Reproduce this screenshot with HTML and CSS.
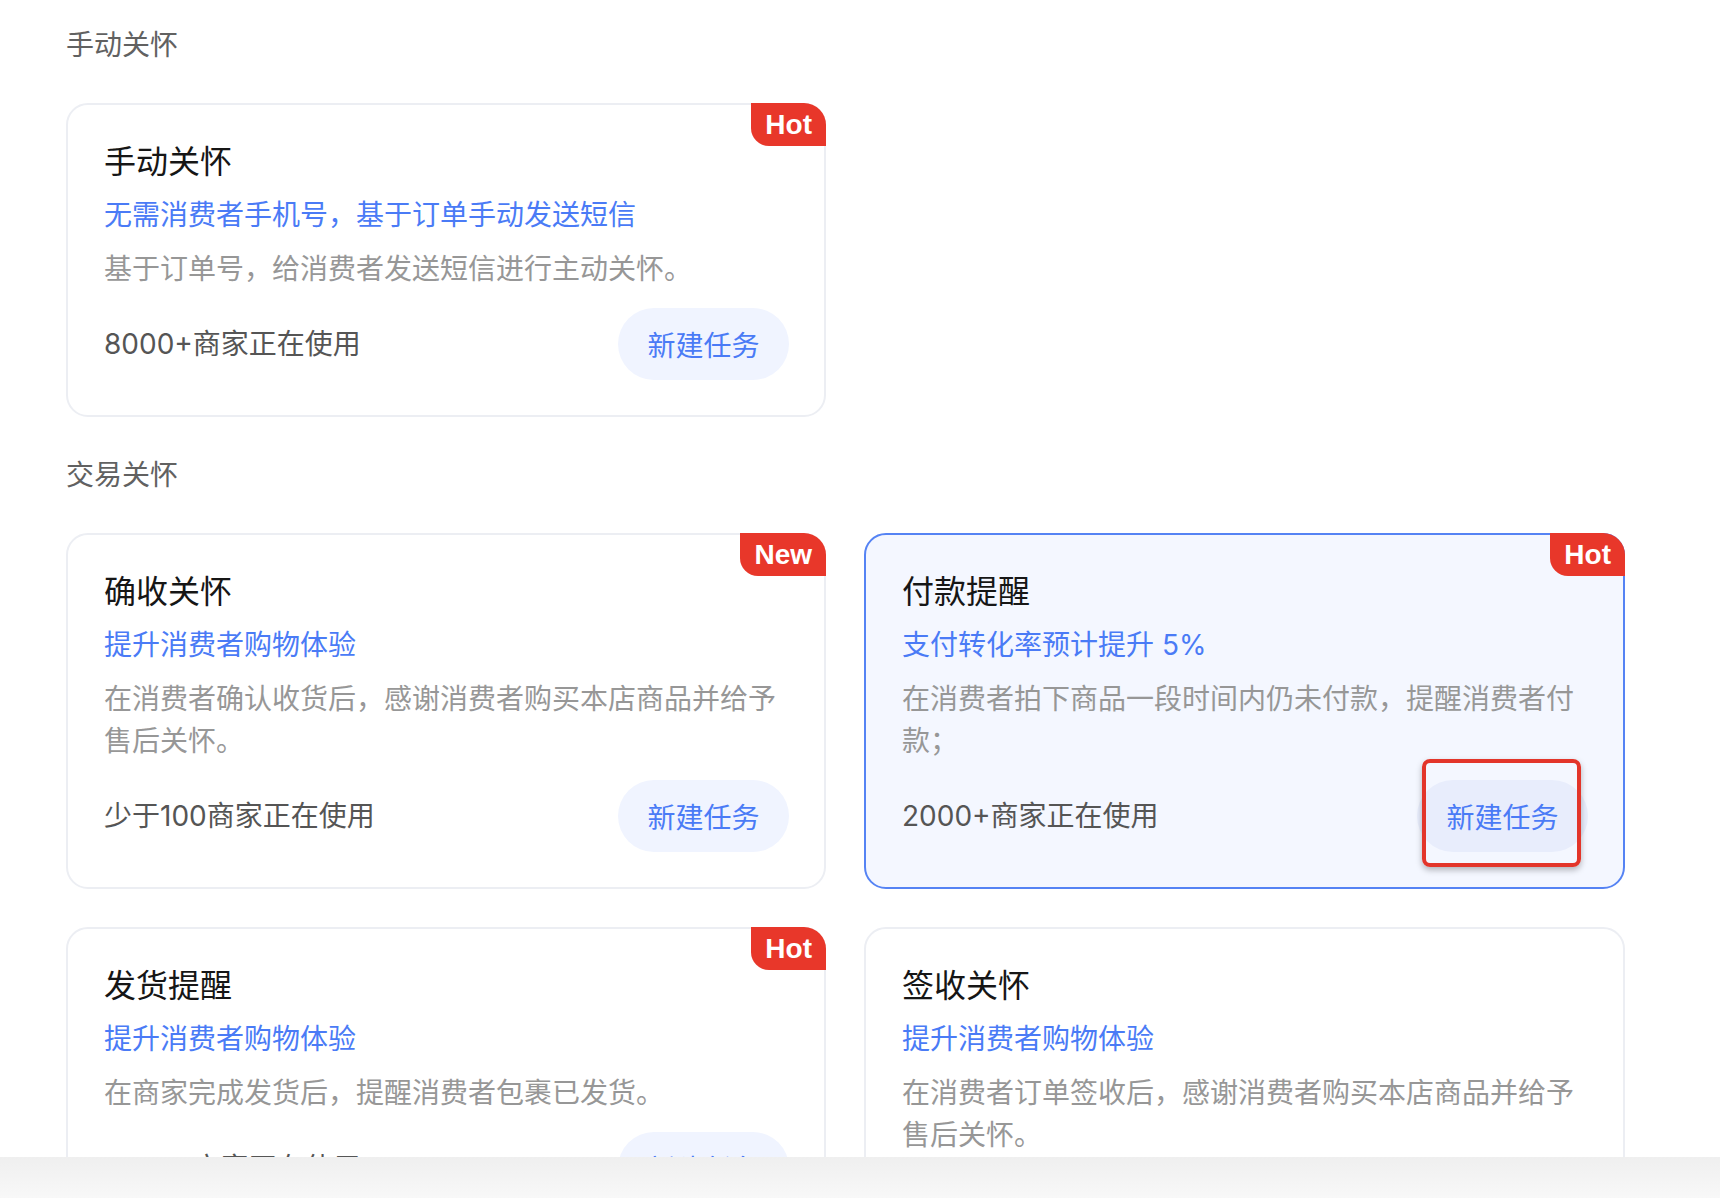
FILE: index.html
```html
<!DOCTYPE html>
<html lang="zh-CN">
<head>
<meta charset="utf-8">
<title>关怀任务</title>
<link rel="stylesheet" href="styles.css">
</head>
<body>
<main class="page">
  <section class="section">
    <h2 class="section-title">手动关怀</h2>
    <div class="grid">
      <div class="card">
        <span class="badge">Hot</span>
        <div class="card-title">手动关怀</div>
        <div class="card-sub">无需消费者手机号，基于订单手动发送短信</div>
        <div class="card-desc">基于订单号，给消费者发送短信进行主动关怀。</div>
        <div class="card-foot">
          <span class="usage">8000+商家正在使用</span>
          <button class="btn">新建任务</button>
        </div>
      </div>
    </div>
  </section>

  <section class="section">
    <h2 class="section-title">交易关怀</h2>
    <div class="grid">
      <div class="card">
        <span class="badge">New</span>
        <div class="card-title">确收关怀</div>
        <div class="card-sub">提升消费者购物体验</div>
        <div class="card-desc">在消费者确认收货后，感谢消费者购买本店商品并给予售后关怀。</div>
        <div class="card-foot">
          <span class="usage">少于100商家正在使用</span>
          <button class="btn">新建任务</button>
        </div>
      </div>
      <div class="card card-active">
        <span class="badge">Hot</span>
        <div class="card-title">付款提醒</div>
        <div class="card-sub">支付转化率预计提升 5%</div>
        <div class="card-desc">在消费者拍下商品一段时间内仍未付款，提醒消费者付款；</div>
        <div class="card-foot">
          <span class="usage">2000+商家正在使用</span>
          <button class="btn btn-marked">新建任务<span class="mark"></span></button>
        </div>
      </div>
      <div class="card">
        <span class="badge">Hot</span>
        <div class="card-title">发货提醒</div>
        <div class="card-sub">提升消费者购物体验</div>
        <div class="card-desc">在商家完成发货后，提醒消费者包裹已发货。</div>
        <div class="card-foot">
          <span class="usage">3000+商家正在使用</span>
          <button class="btn">新建任务</button>
        </div>
      </div>
      <div class="card">
        <div class="card-title">签收关怀</div>
        <div class="card-sub">提升消费者购物体验</div>
        <div class="card-desc">在消费者订单签收后，感谢消费者购买本店商品并给予售后关怀。</div>
        <div class="card-foot">
          <span class="usage">1000+商家正在使用</span>
          <button class="btn">新建任务</button>
        </div>
      </div>
    </div>
  </section>
</main>
<div class="bottom-bar"></div>
</body>
</html>
```

FILE: styles.css
```css
html, body {
  margin: 0;
  padding: 0;
  background: #ffffff;
  overflow: hidden;
  height: 100%;
}

body {
  font-family: "Inter", "Noto Sans CJK SC", sans-serif;
  color: #1a1a1a;
}

.page {
  padding: 25px 0 0 66px;
  display: flex;
  flex-direction: column;
  gap: 38px;
}

.section {
  display: flex;
  flex-direction: column;
  gap: 38px;
}

.section-title {
  margin: 0;
  font-size: 28px;
  line-height: 40px;
  font-weight: 400;
  color: #616161;
}

.grid {
  display: grid;
  grid-template-columns: 760px 761px;
  gap: 38px;
  align-items: start;
}

.card {
  position: relative;
  box-sizing: border-box;
  border: 2px solid #eceef3;
  border-radius: 22px;
  background: #ffffff;
  padding: 33px 35px 35px 36px;
  display: flex;
  flex-direction: column;
}

.card-active {
  border-color: #5583f4;
  background: #f4f7ff;
}

.badge {
  position: absolute;
  top: -2px;
  right: -2px;
  height: 43px;
  padding: 0 14px;
  box-sizing: border-box;
  display: flex;
  align-items: center;
  background: #e8372a;
  color: #ffffff;
  font-family: "Liberation Sans", Arial, sans-serif;
  font-weight: 700;
  font-size: 28px;
  border-radius: 0 22px 0 18px;
}

.card-title {
  font-size: 32px;
  line-height: 48px;
  color: #161616;
}

.card-sub {
  margin-top: 8px;
  font-size: 28px;
  line-height: 42px;
  color: #4a7bf6;
}

.card-desc {
  margin-top: 12px;
  font-size: 28px;
  line-height: 42px;
  color: #979797;
}

.card-foot {
  margin-top: 18px;
  display: flex;
  align-items: center;
  justify-content: space-between;
}

.usage {
  font-size: 28px;
  line-height: 42px;
  color: #555555;
}

.btn {
  position: relative;
  width: 171px;
  height: 72px;
  border: none;
  border-radius: 36px;
  background: #f0f4ff;
  color: #4a7bf6;
  font-family: "Noto Sans CJK SC", sans-serif;
  font-size: 28px;
  padding: 0;
  cursor: pointer;
}

.card-active .btn {
  background: #e8edfc;
}

.mark {
  position: absolute;
  left: 5px;
  top: -21px;
  width: 159px;
  height: 108px;
  box-sizing: border-box;
  border: 4px solid #e3352a;
  border-radius: 8px;
  box-shadow: 0 3px 6px rgba(0, 0, 0, 0.28);
}

.bottom-bar {
  position: fixed;
  left: 0;
  right: 0;
  bottom: 0;
  height: 41px;
  background: linear-gradient(to bottom, #efefef, #f8f8f8);
}
```
